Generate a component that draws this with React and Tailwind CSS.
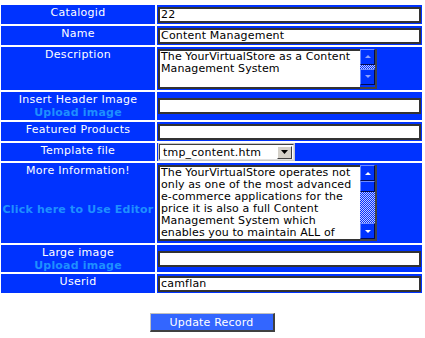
import React from "react";

function Arrow({ dir, pale }) {
  const pts = dir === "up" ? "1,5 4,2 7,5" : "1,2 4,5 7,2";
  return (
    <svg width="8" height="7" viewBox="0 0 8 7">
      <polygon points={pts} fill={pale ? "#8fa2ff" : "#ffffff"} />
    </svg>
  );
}

function ScrollBtn({ dir, pale, h = "h-[16px]" }) {
  return (
    <div className={`${h} w-full flex items-center justify-center bg-[#0033ff] border border-t-[#6f8cff] border-l-[#6f8cff] border-b-[#000a55] border-r-[#000a55]`}>
      {dir && <Arrow dir={dir} pale={pale} />}
    </div>
  );
}

function Track({ h }) {
  return (
    <svg width="15" height={h} className="block">
      <defs>
        <pattern id={`chk${h}`} width="2" height="2" patternUnits="userSpaceOnUse">
          <rect width="2" height="2" fill="#0033ff" />
          <rect width="1" height="1" fill="#c4c8ff" />
          <rect x="1" y="1" width="1" height="1" fill="#c4c8ff" />
        </pattern>
      </defs>
      <rect width="15" height={h} fill={`url(#chk${h})`} />
    </svg>
  );
}

function TextBox({ lines, height, children }) {
  return (
    <div className={`flex w-[219px] ${height}`}>
      <div className="flex-1 bg-white border-2 border-r-0 border-[#333] pl-[1px] leading-[12px] text-black whitespace-nowrap overflow-hidden tracking-[0.1px]">
        {lines.map((l) => (
          <div key={l}>{l}</div>
        ))}
      </div>
      <div className="w-[17px] flex flex-col border-r-2 border-b-2 border-[#444]">{children}</div>
    </div>
  );
}

function Input({ value = "" }) {
  return (
    <div className="w-[263px] h-[16px] bg-white border-2 border-[#333] pl-[1px] leading-[12px] text-black whitespace-nowrap tracking-[0.2px]">
      {value}
    </div>
  );
}

function Label({ children }) {
  return <div className="bg-[#0033ff] text-white text-center pt-[1px] tracking-[0.3px]">{children}</div>;
}

function Cell({ children }) {
  return <div className="bg-[#0033ff] flex items-center pl-[1px]">{children}</div>;
}

const link = "font-bold text-[#1e90ff] tracking-[0.2px]";

export default function App() {
  return (
    <div className="w-[425px] h-[338px] bg-white font-['DejaVu_Sans',Verdana,sans-serif] text-[11px] leading-[13px] pt-[5px] pl-[1px]">
      <div className="grid grid-cols-[154px_265px] grid-rows-[19px_19px_43px_28px_19px_18px_80px_27px_19px] gap-[2px]">
        <Label>Catalogid</Label>
        <Cell><Input value="22" /></Cell>

        <Label>Name</Label>
        <Cell><Input value="Content Management" /></Cell>

        <Label>Description</Label>
        <Cell>
          <TextBox height="h-[40px]" lines={["The YourVirtualStore as a Content", "Management System"]}>
            <ScrollBtn dir="up" pale h="h-[16px]" />
            <Track h={4} />
            <ScrollBtn dir="down" pale h="h-[16px]" />
          </TextBox>
        </Cell>

        <Label>
          Insert Header Image
          <div className={link}>Upload image</div>
        </Label>
        <Cell><Input /></Cell>

        <Label>Featured Products</Label>
        <Cell><Input /></Cell>

        <Label>Template file</Label>
        <Cell>
          <div className="w-[137px] h-[18px] border border-[#c8c8c8] bg-white">
            <div className="h-full flex items-center border border-t-[#404040] border-l-[#404040] border-b-[#e0e0e0] border-r-[#e0e0e0] pl-[3px] text-black tracking-[0.2px]">
              <span className="flex-1">tmp_content.htm</span>
              <div className="w-[15px] h-[13px] mr-[1px] bg-[#d4d0c8] flex items-center justify-center border border-t-white border-l-white border-b-[#404040] border-r-[#404040]">
                <svg width="7" height="4" viewBox="0 0 7 4"><polygon points="0,0 7,0 3.5,4" fill="#000" /></svg>
              </div>
            </div>
          </div>
        </Cell>

        <div className="bg-[#0033ff] text-white text-center pt-[1px] tracking-[0.3px]">
          More Information!
          <div>&nbsp;</div>
          <div>&nbsp;</div>
          <div className={`${link} whitespace-nowrap`}>Click here to Use Editor</div>
        </div>
        <Cell>
          <TextBox
            height="h-[76px]"
            lines={[
              "The YourVirtualStore operates not",
              "only as one of the most advanced",
              "e-commerce applications for the",
              "price it is also a full Content",
              "Management System which",
              "enables you to maintain ALL of",
            ]}
          >
            <ScrollBtn dir="up" h="h-[16px]" />
            <ScrollBtn h="h-[11px]" />
            <Track h={31} />
            <ScrollBtn dir="down" h="h-[16px]" />
          </TextBox>
        </Cell>

        <Label>
          Large image
          <div className={link}>Upload image</div>
        </Label>
        <Cell><Input /></Cell>

        <Label>Userid</Label>
        <Cell><Input value="camflan" /></Cell>
      </div>

      <div className="flex justify-center mt-[20px] pr-[2px]">
        <button className="w-[125px] h-[19px] bg-[#3366ff] text-white border border-t-[#c0c0c0] border-l-[#c0c0c0] border-b-2 border-r-2 border-b-[#404040] border-r-[#404040] leading-[13px] tracking-[0.2px]">
          Update Record
        </button>
      </div>
    </div>
  );
}
